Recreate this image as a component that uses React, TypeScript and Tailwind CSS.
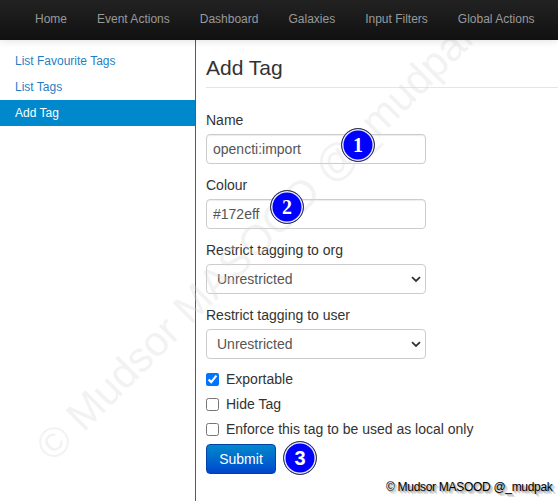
import React from "react";

const navItems = ["Home", "Event Actions", "Dashboard", "Galaxies", "Input Filters", "Global Actions"];

function Chevron() {
  return (
    <svg width="10" height="7" viewBox="0 0 10 7" className="absolute right-[5px] top-[12px] pointer-events-none">
      <path d="M1 1.2 L5 5 L9 1.2" fill="none" stroke="#333" strokeWidth="1.8" />
    </svg>
  );
}

function Badge({ n, left, top, serif }: { n: string; left: number; top: number; serif?: boolean }) {
  return (
    <div
      className={
        "absolute w-[34px] h-[34px] rounded-full bg-[#0000ff] border border-[#3a3a3a] shadow-[inset_0_0_0_1.5px_#e8e8ff] flex items-center justify-center text-white font-bold text-[20px] leading-none " +
        (serif ? "font-['Liberation_Serif',serif]" : "font-['Liberation_Sans',sans-serif]")
      }
      style={{ left, top }}
    >
      {n}
    </div>
  );
}

export default function App() {
  return (
    <div className="relative w-full min-h-[501px] h-[501px] overflow-hidden bg-white font-['Liberation_Sans',Arial,sans-serif]">
      {/* navbar */}
      <div className="relative z-10 h-[40px] bg-gradient-to-b from-[#222222] to-[#111111] flex pl-[20px] shadow-[0_1px_8px_rgba(0,0,0,0.12)]">
        {navItems.map((t) => (
          <div key={t} className="px-[15px] pt-[9px] leading-[20px] text-[12px] text-[#999999]">
            {t}
          </div>
        ))}
      </div>

      <div className="flex h-[461px]">
        {/* sidebar */}
        <div className="w-[196px] shrink-0 border-r border-[#5a5a5a] pt-[8px]">
          <div className="h-[26px] leading-[26px] px-[15px] text-[12px] text-[#1f7fc4]">List Favourite Tags</div>
          <div className="h-[26px] leading-[26px] px-[15px] text-[12px] text-[#1f7fc4]">List Tags</div>
          <div className="h-[26px] leading-[26px] px-[15px] text-[12px] text-white bg-[#0088cc]">Add Tag</div>
        </div>

        {/* main */}
        <div className="flex-1 pl-[10px] pt-[8px]">
          <div className="h-[40px] leading-[40px] text-[21px] text-[#333333] border-b border-[#e5e5e5] mb-[22px]">
            Add Tag
          </div>

          <div className="text-[14px] text-[#333333] leading-[20px] mb-[4px]">Name</div>
          <input
            readOnly
            value="opencti:import"
            className="block w-[220px] h-[30px] border border-[#cccccc] rounded-[4px] px-[6px] text-[14px] text-[#555555] shadow-[inset_0_1px_1px_rgba(0,0,0,0.075)] mb-[11px] outline-none"
          />

          <div className="text-[14px] text-[#333333] leading-[20px] mb-[4px]">Colour</div>
          <input
            readOnly
            value="#172eff"
            className="block w-[220px] h-[30px] border border-[#cccccc] rounded-[4px] px-[6px] text-[14px] text-[#555555] shadow-[inset_0_1px_1px_rgba(0,0,0,0.075)] mb-[11px] outline-none"
          />

          <div className="text-[14px] text-[#333333] leading-[20px] mb-[4px]">Restrict tagging to org</div>
          <div className="relative w-[220px] h-[30px] mb-[11px]">
            <div className="w-full h-full border border-[#cccccc] rounded-[4px] pl-[10px] leading-[28px] text-[14px] text-[#555555] bg-white">
              Unrestricted
            </div>
            <Chevron />
          </div>

          <div className="text-[14px] text-[#333333] leading-[20px] mb-[4px]">Restrict tagging to user</div>
          <div className="relative w-[220px] h-[30px] mb-[10px]">
            <div className="w-full h-full border border-[#cccccc] rounded-[4px] pl-[10px] leading-[28px] text-[14px] text-[#555555] bg-white">
              Unrestricted
            </div>
            <Chevron />
          </div>

          {[
            ["Exportable", true],
            ["Hide Tag", false],
            ["Enforce this tag to be used as local only", false],
          ].map(([label, checked]) => (
            <label key={label as string} className="flex items-center h-[20px] mb-[5px] text-[14px] text-[#333333]">
              <input type="checkbox" defaultChecked={checked as boolean} className="w-[13px] h-[13px] mr-[7px] accent-[#0075ff]" />
              {label as string}
            </label>
          ))}

          <button className="w-[70px] h-[30px] rounded-[4px] bg-gradient-to-b from-[#0088cc] to-[#0044cc] border border-[#0044aa] text-white text-[14px]">
            Submit
          </button>
        </div>
      </div>

      {/* diagonal watermark */}
      <div className="absolute left-[258px] top-[238px] -translate-x-1/2 -translate-y-1/2 -rotate-45 whitespace-nowrap text-[42px] text-[rgba(215,215,215,0.32)] pointer-events-none">
        © Mudsor MASOOD @_mudpak
      </div>

      <Badge n="1" left={341} top={128} serif />
      <Badge n="2" left={270} top={190} serif />
      <Badge n="3" left={283} top={441} />

      <div className="absolute left-[386px] top-[478px] text-[12px] tracking-[-0.3px] text-black whitespace-nowrap [text-shadow:1px_1px_0_#b5b5b5,2px_2px_0_#c8c8c8,3px_3px_0_#dcdcdc]">
        © Mudsor MASOOD @_mudpak
      </div>
    </div>
  );
}
